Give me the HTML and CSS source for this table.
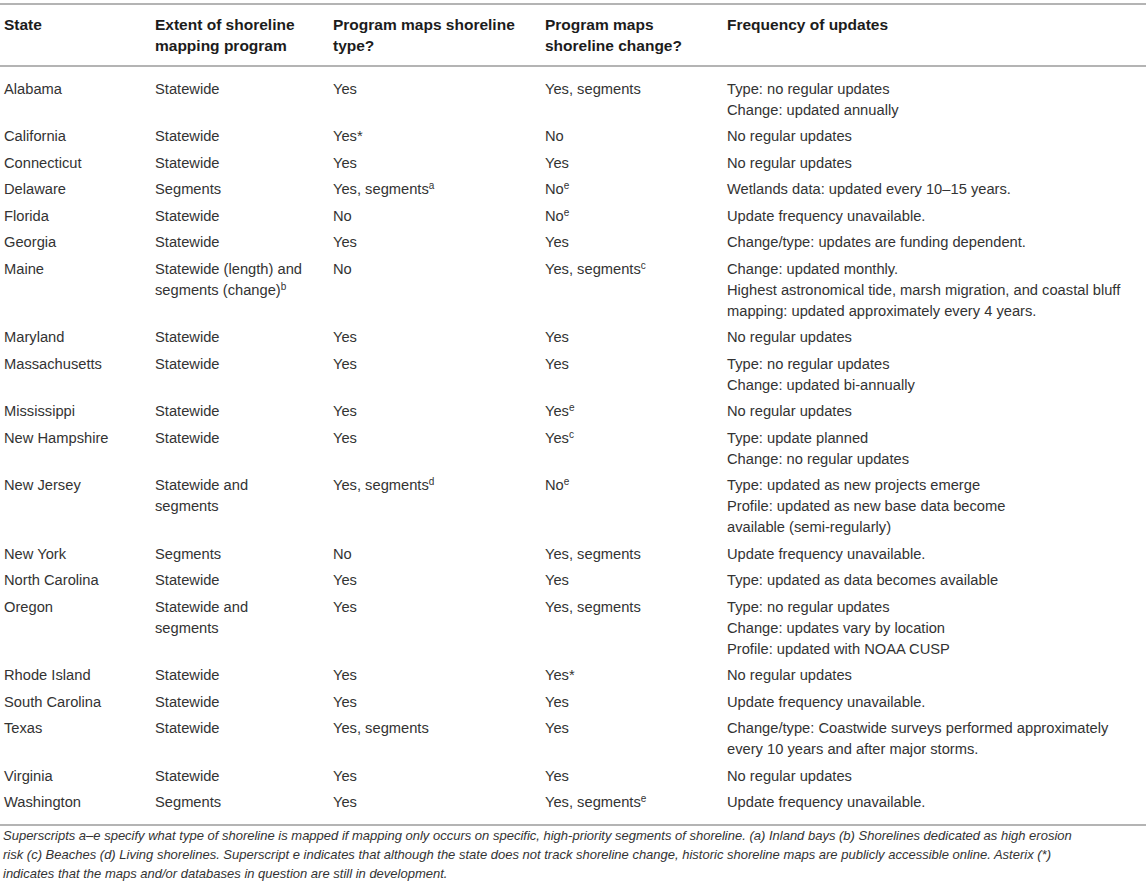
FILE: index.html
```html
<!DOCTYPE html>
<html lang="en">
<head>
<meta charset="utf-8">
<title>Shoreline mapping programs</title>
<link rel="stylesheet" href="styles.css">
</head>
<body>
<table class="data">
  <colgroup>
    <col class="c1"><col class="c2"><col class="c3"><col class="c4"><col class="c5">
  </colgroup>
  <thead>
    <tr>
      <th>State</th>
      <th>Extent of shoreline<br>mapping program</th>
      <th>Program maps shoreline<br>type?</th>
      <th>Program maps<br>shoreline change?</th>
      <th>Frequency of updates</th>
    </tr>
  </thead>
  <tbody>
    <tr><td>Alabama</td><td>Statewide</td><td>Yes</td><td>Yes, segments</td><td>Type: no regular updates<br>Change: updated annually</td></tr>
    <tr><td>California</td><td>Statewide</td><td>Yes*</td><td>No</td><td>No regular updates</td></tr>
    <tr><td>Connecticut</td><td>Statewide</td><td>Yes</td><td>Yes</td><td>No regular updates</td></tr>
    <tr><td>Delaware</td><td>Segments</td><td>Yes, segments<sup>a</sup></td><td>No<sup>e</sup></td><td>Wetlands data: updated every 10–15 years.</td></tr>
    <tr><td>Florida</td><td>Statewide</td><td>No</td><td>No<sup>e</sup></td><td>Update frequency unavailable.</td></tr>
    <tr><td>Georgia</td><td>Statewide</td><td>Yes</td><td>Yes</td><td>Change/type: updates are funding dependent.</td></tr>
    <tr><td>Maine</td><td>Statewide (length) and<br>segments (change)<sup>b</sup></td><td>No</td><td>Yes, segments<sup>c</sup></td><td>Change: updated monthly.<br>Highest astronomical tide, marsh migration, and coastal bluff<br>mapping: updated approximately every 4 years.</td></tr>
    <tr><td>Maryland</td><td>Statewide</td><td>Yes</td><td>Yes</td><td>No regular updates</td></tr>
    <tr><td>Massachusetts</td><td>Statewide</td><td>Yes</td><td>Yes</td><td>Type: no regular updates<br>Change: updated bi-annually</td></tr>
    <tr><td>Mississippi</td><td>Statewide</td><td>Yes</td><td>Yes<sup>e</sup></td><td>No regular updates</td></tr>
    <tr><td>New Hampshire</td><td>Statewide</td><td>Yes</td><td>Yes<sup>c</sup></td><td>Type: update planned<br>Change: no regular updates</td></tr>
    <tr><td>New Jersey</td><td>Statewide and<br>segments</td><td>Yes, segments<sup>d</sup></td><td>No<sup>e</sup></td><td>Type: updated as new projects emerge<br>Profile: updated as new base data become<br>available (semi-regularly)</td></tr>
    <tr><td>New York</td><td>Segments</td><td>No</td><td>Yes, segments</td><td>Update frequency unavailable.</td></tr>
    <tr><td>North Carolina</td><td>Statewide</td><td>Yes</td><td>Yes</td><td>Type: updated as data becomes available</td></tr>
    <tr><td>Oregon</td><td>Statewide and<br>segments</td><td>Yes</td><td>Yes, segments</td><td>Type: no regular updates<br>Change: updates vary by location<br>Profile: updated with NOAA CUSP</td></tr>
    <tr><td>Rhode Island</td><td>Statewide</td><td>Yes</td><td>Yes*</td><td>No regular updates</td></tr>
    <tr><td>South Carolina</td><td>Statewide</td><td>Yes</td><td>Yes</td><td>Update frequency unavailable.</td></tr>
    <tr><td>Texas</td><td>Statewide</td><td>Yes, segments</td><td>Yes</td><td>Change/type: Coastwide surveys performed approximately<br>every 10 years and after major storms.</td></tr>
    <tr><td>Virginia</td><td>Statewide</td><td>Yes</td><td>Yes</td><td>No regular updates</td></tr>
    <tr><td>Washington</td><td>Segments</td><td>Yes</td><td>Yes, segments<sup>e</sup></td><td>Update frequency unavailable.</td></tr>
  </tbody>
</table>
<p class="note">Superscripts a–e specify what type of shoreline is mapped if mapping only occurs on specific, high-priority segments of shoreline. (a) Inland bays (b) Shorelines dedicated as high erosion<br>risk (c) Beaches (d) Living shorelines. Superscript e indicates that although the state does not track shoreline change, historic shoreline maps are publicly accessible online. Asterix (*)<br>indicates that the maps and/or databases in question are still in development.</p>
</body>
</html>
```

FILE: styles.css
```css
html, body {
  margin: 0;
  padding: 0;
  background: #ffffff;
}

body {
  font-family: "Liberation Sans", Arial, Helvetica, sans-serif;
  color: #333333;
}

.data {
  width: 1146px;
  margin-top: 3px;
  border-collapse: separate;
  border-spacing: 0;
  table-layout: fixed;
}

.c1 { width: 151px; }
.c2 { width: 178px; }
.c3 { width: 212px; }
.c4 { width: 182px; }
.c5 { width: 423px; }

.data th {
  text-align: left;
  vertical-align: top;
  font-weight: bold;
  font-size: 15.5px;
  line-height: 21px;
  color: #1c1c1c;
  padding: 8.5px 4px 9.5px 4px;
  border-top: 2px solid #b4b4b4;
  border-bottom: 2px solid #b4b4b4;
}

.data td {
  text-align: left;
  vertical-align: top;
  font-size: 14.7px;
  line-height: 21px;
  padding: 2.75px 4px;
  white-space: nowrap;
}

.data tbody tr:first-child td {
  padding-top: 11.75px;
}

.data tbody tr:last-child td {
  padding-bottom: 10.25px;
  border-bottom: 2px solid #b4b4b4;
}

.data sup {
  font-size: 10px;
  line-height: 0;
  vertical-align: 5px;
}

.note {
  margin: 0;
  padding: 0 0 0 3px;
  font-style: italic;
  font-size: 13px;
  line-height: 19px;
  color: #333333;
  white-space: nowrap;
}
```
